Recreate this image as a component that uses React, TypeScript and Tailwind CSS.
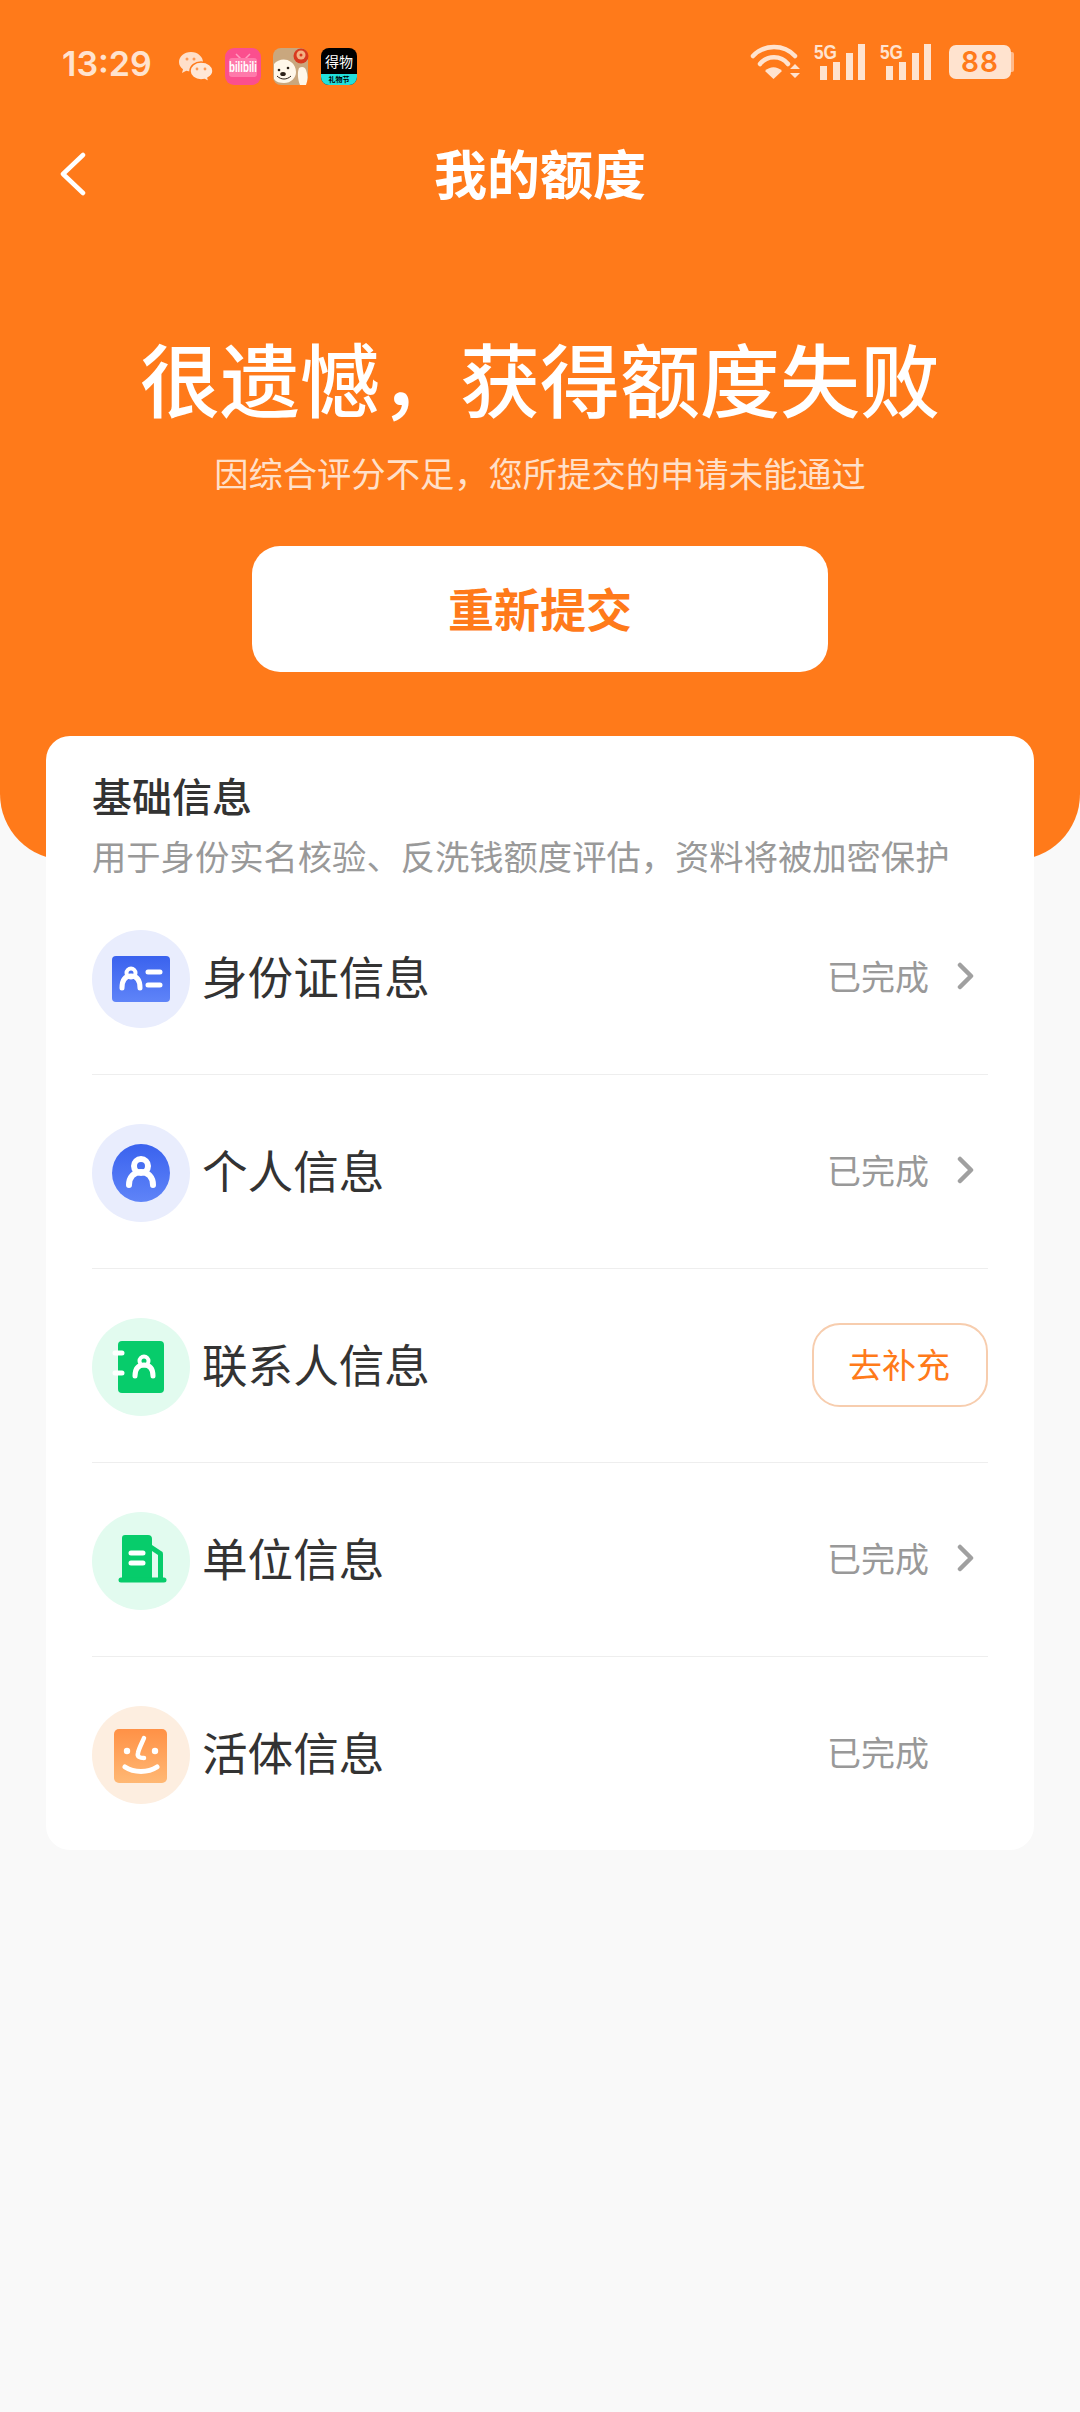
const cjk = "font-['Noto_Sans_CJK_SC','Noto_Sans',sans-serif]";

const IdCardIcon = () => (
  <svg viewBox="0 0 98 98" className="w-full h-full">
    <defs>
      <linearGradient id="blueA" x1="0" y1="0" x2="0" y2="1">
        <stop offset="0" stopColor="#3a62ee" />
        <stop offset="1" stopColor="#5f84f8" />
      </linearGradient>
    </defs>
    <rect x="20" y="26" width="58" height="46" rx="4" fill="url(#blueA)" />
    <circle cx="39" cy="43" r="4.500" fill="none" stroke="#fff" strokeWidth="4" />
    <path d="M30 58c0-8 3-12 9-12s9 4 9 12" fill="none" stroke="#fff" strokeWidth="5" strokeLinecap="round" />
    <path d="M56 42h12M56 55h12" stroke="#fff" strokeWidth="5" strokeLinecap="round" />
  </svg>
);

const PersonIcon = () => (
  <svg viewBox="0 0 98 98" className="w-full h-full">
    <defs>
      <linearGradient id="blueB" x1="0" y1="0" x2="0" y2="1">
        <stop offset="0" stopColor="#3a62ee" />
        <stop offset="1" stopColor="#5f84f8" />
      </linearGradient>
    </defs>
    <circle cx="49" cy="49" r="29" fill="url(#blueB)" />
    <circle cx="49" cy="42" r="7" fill="none" stroke="#fff" strokeWidth="6" />
    <path d="M37 61c0-8 5-13 12-13s12 5 12 13" fill="none" stroke="#fff" strokeWidth="6" strokeLinecap="round" />
  </svg>
);

const ContactIcon = () => (
  <svg viewBox="0 0 98 98" className="w-full h-full">
    <rect x="26" y="23" width="46" height="52" rx="4" fill="#07cc6b" />
    <path d="M23 35h7M23 55h7" stroke="#fff" strokeWidth="5" strokeLinecap="round" />
    <circle cx="52" cy="43" r="4.500" fill="none" stroke="#fff" strokeWidth="4" />
    <path d="M43 58c0-7 3-11 9-11s9 4 9 11" fill="none" stroke="#fff" strokeWidth="5" strokeLinecap="round" />
  </svg>
);

const BuildingIcon = () => (
  <svg viewBox="0 0 98 98" className="w-full h-full">
    <path d="M33 23h23a4 4 0 0 1 4 4v40H30V26a3 3 0 0 1 3-3z" fill="#07cc6b" />
    <path d="M60 33l9 6a3 3 0 0 1 2 3v25h-5V43l-6-4z" fill="#07cc6b" />
    <path d="M29 68h43" stroke="#07cc6b" strokeWidth="5" strokeLinecap="round" />
    <path d="M39 41h12M39 51h12" stroke="#fff" strokeWidth="5" strokeLinecap="round" />
  </svg>
);

const FaceIcon = () => (
  <svg viewBox="0 0 98 98" className="w-full h-full">
    <defs>
      <linearGradient id="orangeA" x1="0" y1="0" x2="0" y2="1">
        <stop offset="0" stopColor="#ff9146" />
        <stop offset="1" stopColor="#ffb874" />
      </linearGradient>
    </defs>
    <rect x="22" y="23" width="53" height="54" rx="5" fill="url(#orangeA)" />
    <circle cx="35" cy="45" r="3.200" fill="#fff" />
    <circle cx="63" cy="45" r="3.200" fill="#fff" />
    <path d="M52 32c-2 5-5 10-6 15-1 4 2 5 6 5" fill="none" stroke="#fff" strokeWidth="4.500" strokeLinecap="round" strokeLinejoin="round" />
    <path d="M33 61c9 6 23 6 32 0" fill="none" stroke="#fff" strokeWidth="5" strokeLinecap="round" />
  </svg>
);

const Chevron = () => (
  <svg viewBox="0 0 18 28" className="w-[18px] h-[28px]">
    <path d="M3 3l11 11L3 25" fill="none" stroke="#a0a0a0" strokeWidth="4.500" strokeLinecap="round" strokeLinejoin="round" />
  </svg>
);

const WeChat = () => (
  <svg viewBox="0 0 34 30" className="w-[34px] h-[30px]">
    <path d="M12 0C5 0 0 4.600 0 10c0 3 1.500 5.500 4 7.200L3 21l4.300-2.200c1.500.5 3 .7 4.700.7C19 19.500 24 15 24 10S19 0 12 0z" fill="#ffdfc9" />
    <path d="M22 10c-6 0-11 4-11 9s5 9 11 9c1.300 0 2.500-.2 3.700-.5L30 30l-1-4c3-1.700 5-4.400 5-7 0-5-5-9-12-9z" fill="#ffe7d6" stroke="#ff7a1a" strokeWidth="1.500" />
    <circle cx="8" cy="7" r="1.500" fill="#ff9a55" />
    <circle cx="15" cy="7" r="1.500" fill="#ff9a55" />
    <circle cx="18" cy="17" r="1.400" fill="#ff9a55" />
    <circle cx="26" cy="17" r="1.400" fill="#ff9a55" />
  </svg>
);

const Bilibili = () => (
  <svg viewBox="0 0 36 37" className="w-[36px] h-[37px] overflow-visible">
    <rect width="36" height="37" rx="9" fill="#fb4f8e" />
    <path d="M11 6l5 5M25 6l-5 5" stroke="#ff9cc0" strokeWidth="1.500" />
    <rect x="4" y="10" width="28" height="19" rx="3" fill="#ff79aa" />
    <text x="4" y="24" fontSize="14" fontWeight="700" fill="#fff" fontFamily="'Liberation Sans',sans-serif" textLength="28" lengthAdjust="spacingAndGlyphs">bilibili</text>
  </svg>
);

const Bear = () => (
  <svg viewBox="0 0 36 37" className="w-[36px] h-[37px]">
    <rect x="0" y="0" width="35" height="37" rx="8" fill="#c9a77e" />
    <path d="M1 16c4-5 12-6 17-2 3 2 5 6 5 10 0 6-5 11-12 11-4 0-8-1-10-4z" fill="#fff7ea" />
    <path d="M26 20c3-2 6-1 7 2 2 5 2 10 0 15h-6c-2-5-3-12-1-17z" fill="#fff7ea" />
    <circle cx="28" cy="8" r="7.500" fill="#d8391f" />
    <circle cx="28" cy="7" r="4.500" fill="#f4b183" />
    <circle cx="28" cy="7" r="1.500" fill="#d8391f" />
    <circle cx="6" cy="22" r="1.300" fill="#2b2018" />
    <circle cx="15" cy="20" r="1.300" fill="#2b2018" />
    <ellipse cx="10" cy="26" rx="2.800" ry="2" fill="#2b2018" />
    <path d="M4 28c4 4 10 4 14 0" fill="none" stroke="#2b2018" strokeWidth="1" />
  </svg>
);

const Dewu = () => (
  <div className="w-[36px] h-[37px] rounded-[8px] bg-black overflow-hidden flex flex-col items-center">
    <span className={`${cjk} text-[14px] leading-[26px] h-[26px] text-white whitespace-nowrap`}>得物</span>
    <span className={`${cjk} w-full h-[11px] bg-[#22e0dc] text-black text-[7px] leading-[11px] text-center font-bold whitespace-nowrap`}>礼物节</span>
  </div>
);

const Wifi = () => (
  <svg viewBox="0 0 50 36" className="w-[50px] h-[36px]">
    <path d="M3 12C14 0 34 0 45 12" fill="none" stroke="#ffe3cf" strokeWidth="4.500" strokeLinecap="round" />
    <path d="M10 20C17 11 31 11 38 20" fill="none" stroke="#ffe3cf" strokeWidth="4.500" strokeLinecap="round" />
    <path d="M15 27c5-5 12-5 17 0l-8.500 8z" fill="#ffe3cf" />
    <path d="M40 25l5-5 5 5zM40 29h10l-5 5z" fill="#ffe3cf" />
  </svg>
);

const Signal = () => (
  <svg viewBox="0 0 52 36" className="w-[52px] h-[36px] overflow-visible">
    <text x="0" y="15" fontSize="20" fontWeight="700" fill="#ffe3cf" fontFamily="'Liberation Sans',sans-serif" textLength="23" lengthAdjust="spacingAndGlyphs">5G</text>
    <rect x="6" y="22" width="7" height="14" fill="#ffe3cf" />
    <rect x="19" y="18" width="7" height="18" fill="#ffe3cf" />
    <rect x="32" y="9" width="7" height="27" fill="#ffe3cf" />
    <rect x="44" y="0" width="7" height="36" fill="#ffe3cf" />
  </svg>
);

const Battery = () => (
  <div className="flex items-center">
    <div className="w-[62px] h-[34px] rounded-[7px] bg-[#ffe3cf] flex items-center justify-center text-[28px] font-semibold tracking-[1px] text-[#ff7a1a] font-['Inter',sans-serif] leading-none">
      88
    </div>
    <div className="w-[3px] h-[20px] rounded-r-[2px] bg-[#ffb98a]" />
  </div>
);

const StatusBar = () => (
  <div className="h-[124px] pt-[44px] pl-[62px] pr-[66px] flex justify-between items-start">
    <div className="flex items-center gap-[12px] pt-[2px]">
      <span className="w-[105px] pb-[5px] text-[34px] leading-[36px] font-semibold text-[#ffe3cf] font-['Inter',sans-serif]">13:29</span>
      <WeChat />
      <Bilibili />
      <Bear />
      <Dewu />
    </div>
    <div className="flex items-center gap-[14px]">
      <Wifi />
      <Signal />
      <Signal />
      <div className="ml-[3px]">
        <Battery />
      </div>
    </div>
  </div>
);

const rows = [
  { title: "身份证信息", bg: "bg-[#e9edfd]", icon: <IdCardIcon />, status: "done" },
  { title: "个人信息", bg: "bg-[#e9edfd]", icon: <PersonIcon />, status: "done" },
  { title: "联系人信息", bg: "bg-[#e2fbef]", icon: <ContactIcon />, status: "todo" },
  { title: "单位信息", bg: "bg-[#e2fbef]", icon: <BuildingIcon />, status: "done" },
  { title: "活体信息", bg: "bg-[#fdeee0]", icon: <FaceIcon />, status: "final" },
];

const App = () => {
  return (
    <div className={`${cjk} w-[1080px] min-h-[2412px] bg-[#f9f9f9]`}>
      <header className="h-[860px] bg-[#ff7a1a] rounded-b-[66px] flex flex-col">
        <StatusBar />
        <div className="h-[102px] px-[60px] grid grid-cols-[1fr_auto_1fr] items-center">
          <svg viewBox="0 0 26 44" className="w-[26px] h-[44px] -mt-[2px]">
            <path d="M23 3L3 22l20 19" fill="none" stroke="#fff" strokeWidth="4.500" strokeLinecap="round" strokeLinejoin="round" />
          </svg>
          <h1 className="text-[53px] leading-[60px] pb-[6px] font-bold text-white">我的额度</h1>
          <div />
        </div>
        <h2 className="mt-[100px] h-[104px] text-[80px] leading-[100px] font-medium text-white text-center">很遗憾，获得额度失败</h2>
        <p className="mt-[22px] h-[42px] text-[34.3px] leading-[40px] text-[#ffe0ca] text-center">因综合评分不足，您所提交的申请未能通过</p>
        <button className="mt-[52px] mx-auto w-[576px] h-[126px] pb-[4px] rounded-[28px] bg-white text-[46px] font-bold text-[#ff7a1a]">重新提交</button>
      </header>

      <main className="-mt-[124px] mx-[46px] bg-white rounded-[24px] px-[46px] pt-[35px] pb-[46px]">
        <h3 className="text-[40px] leading-[48px] h-[51px] font-medium text-[#333]">基础信息</h3>
        <p className="mt-[11px] text-[34.3px] leading-[44px] text-[#999] whitespace-nowrap">用于身份实名核验、反洗钱额度评估，资料将被加密保护</p>
        <ul className="pt-[4px]">
          {rows.map((row, i) => (
            <li
              key={row.title}
              className={
                i < rows.length - 1
                  ? "flex items-center pt-[49px] pb-[46px] border-b border-[#eeeeee]"
                  : "flex items-center pt-[49px]"
              }
            >
              <div className={`w-[98px] h-[98px] rounded-full shrink-0 ${row.bg}`}>{row.icon}</div>
              <span className="ml-[12px] pb-[8px] text-[45.6px] leading-[60px] text-[#333] grow">{row.title}</span>
              {row.status === "todo" ? (
                <button className="w-[176px] h-[84px] mb-[4px] pb-[4px] pr-[2px] rounded-[28px] border-2 border-[#f7cdae] text-[34px] text-[#ff7a1a]">去补充</button>
              ) : (
                <div className="flex items-center pb-[6px]">
                  <span className="text-[34px] leading-[44px] text-[#999]">已完成</span>
                  <div className="w-[59px] pl-[28px] pr-[10px]">
                    {row.status === "done" && <Chevron />}
                  </div>
                </div>
              )}
            </li>
          ))}
        </ul>
      </main>
    </div>
  );
};

export default App;
